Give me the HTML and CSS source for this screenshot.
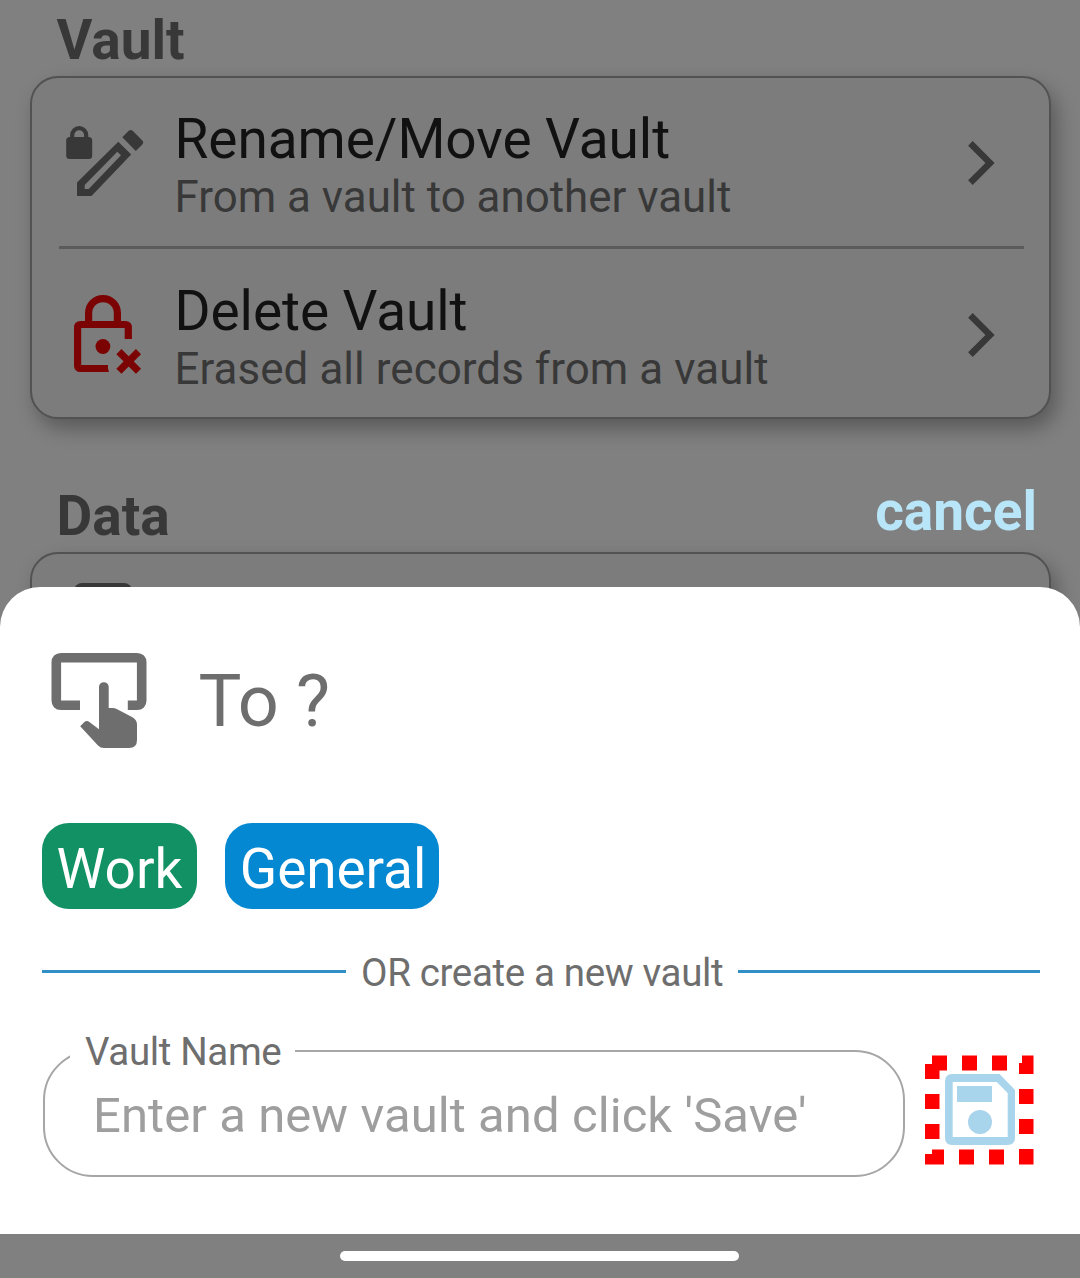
FILE: index.html
```html
<!DOCTYPE html>
<html lang="en">
<head>
<meta charset="utf-8">
<title>Vault settings</title>
<link rel="stylesheet" href="styles.css">
</head>
<body>
<div class="screen">
  <main class="settings">
    <h2 class="heading">Vault</h2>
    <section class="card">
      <div class="row">
        <svg class="row-icon" viewBox="60 120 90 84" fill="#383838">
          <rect x="66.2" y="137" width="26" height="22" rx="3.5"/>
          <path d="M72.2 139v-3.8a7 7 0 0 1 14 0v3.8" fill="none" stroke="#383838" stroke-width="4.2"/>
          <path fill-rule="evenodd" d="M77 182.5L118.3 141.7L131.2 154.5L91.5 196H77zM84.7 185V189H88.7L121 155.2L117.3 151.7z"/>
          <path d="M122.3 137.3l6.2-6.2q2.2-2 4.4 0l9.2 9.2q2.2 2.200 0 4.400l-6.300 6.300z"/>
        </svg>
        <div class="row-text">
          <div class="title">Rename/Move Vault</div>
          <div class="subtitle">From a vault to another vault</div>
        </div>
        <svg class="chevron" viewBox="0 0 28 44"><path d="M2.400 2.400L22 22L2.400 41.600" fill="none" stroke="#383838" stroke-width="6.500"/></svg>
      </div>
      <div class="divider"></div>
      <div class="row row-delete">
        <svg class="row-icon" viewBox="60 292 90 84" fill="#7c0303">
          <g fill="none" stroke="#7c0303" stroke-width="7.200">
            <path d="M88.600 323v-10a14.400 14.400 0 0 1 28.800 0v10"/>
            <path d="M128.300 339v-11.500q0-3-3-3h-44.700q-3 0-3 3v38q0 3 3 3h27.400"/>
            <path d="M118.900 351.600l19.600 19.600M138.500 351.600l-19.600 19.600"/>
          </g>
          <path d="M106 364.900h1l2 7.200h-3z"/>
          <circle cx="102.900" cy="346.500" r="7.400"/>
        </svg>
        <div class="row-text">
          <div class="title">Delete Vault</div>
          <div class="subtitle">Erased all records from a vault</div>
        </div>
        <svg class="chevron" viewBox="0 0 28 44"><path d="M2.400 2.400L22 22L2.400 41.600" fill="none" stroke="#383838" stroke-width="6.500"/></svg>
      </div>
    </section>
    <h2 class="heading heading-data">Data</h2>
    <section class="card card-data">
      <div class="data-icon"></div>
    </section>
  </main>

  <div class="overlay">
    <div class="cancel">cancel</div>
    <section class="sheet">
      <header class="sheet-head">
        <svg class="touch" viewBox="51 653 97 96" fill="#6e6e6e">
          <path d="M80 705.200H61q-4.700 0-4.700-4.700v-38q0-4.700 4.700-4.700h76q4.700 0 4.700 4.700v38q0 4.700-4.700 4.700h-9.200" fill="none" stroke="#6e6e6e" stroke-width="9.600"/>
          <path d="M99 729.200V687a4.850 4.850 0 0 1 9.700 0v21h4q2 0 4 1L132 717q5 2.800 5 7.500V740q0 8-8 8h-25q-3.500 0-6-2.500L80.200 726.300l4.200-4.200q2.200-2 5-.2z"/>
        </svg>
        <span class="to">To ?</span>
      </header>
      <div class="chips">
        <span class="chip work">Work</span>
        <span class="chip general">General</span>
      </div>
      <div class="or"><span>OR create a new vault</span></div>
      <div class="entry">
        <div class="field">
          <label class="label">Vault Name</label>
          <span class="placeholder">Enter a new vault and click 'Save'</span>
        </div>
        <svg class="save" viewBox="924 1055 110 110">
          <g fill="#ff0000">
            <path d="M932 1055.500h15v15h-7.500v8.500h-14.500v-15h7z"/>
            <path d="M962 1055.500h15v15h-15zM992 1055.500h15v15h-15z"/>
            <path d="M1022 1055.500h11.500v18.500h-14.500v-11h3z"/>
            <path d="M925 1094h14.500v15h-14.500zM925 1124h14.500v15h-14.500z"/>
            <path d="M932 1149.500h12v15h-19v-10.500h7z"/>
            <path d="M959 1149.500h15v15h-15zM989 1149.500h15v15h-15z"/>
            <path d="M1019 1089h14.500v15h-14.500zM1019 1119h14.500v15h-14.500zM1019 1149h14.500v15.500h-14.500z"/>
          </g>
          <g fill="#a8d4ec">
            <path fill-rule="evenodd" d="M952 1074h47.500l15.500 16v47.500q0 7.500-7.500 7.500h-55.500q-7 0-7-7.500v-56q0-7.500 7-7.500zM952.700 1082v55h55v-44l-10.900-11z"/>
            <rect x="957" y="1086" width="35" height="16"/>
            <circle cx="980" cy="1122" r="12"/>
          </g>
        </svg>
      </div>
    </section>
    <footer class="nav"><div class="handle"></div></footer>
  </div>
</div>
</body>
</html>
```
FILE: styles.css
```css
* { box-sizing: border-box; }
body { margin: 0; font-family: Roboto, sans-serif; background: #808080; }
.screen { position: relative; width: 1080px; height: 1278px; overflow: hidden; }
.settings { padding: 10px 29px 0 30px; color: #383838; }
.heading { margin: 0 0 6px 26.500px; font-size: 55px; line-height: 60px; font-weight: 700; }
.card {
  height: 343px;
  border: 2px solid #525252;
  border-radius: 28px;
  background: #7c7c7c;
  box-shadow: 6px 10px 20px rgba(0, 0, 0, .3);
}
.row { display: flex; align-items: flex-start; height: 168px; padding: 31px 53px 0 28px; }
.row-delete { padding-top: 32px; }
.divider { height: 3px; margin: 0 25px 0 27px; background: #5b5b5b; }
.row-icon { width: 90px; height: 84px; margin-top: 11px; flex: none; }
.row-text { flex: 1; margin-left: 24.500px; white-space: nowrap; }
.title { font-size: 55px; line-height: 60px; letter-spacing: -.08px; color: #111; }
.subtitle { margin-top: 3px; font-size: 43.900px; line-height: 51px; }
.row-delete .subtitle { letter-spacing: .07px; }
.chevron { width: 28px; height: 44px; margin-top: 32px; flex: none; }
.heading-data { margin-top: 67px; }
.card-data { padding: 29px 0 0 42px; }
.data-icon { width: 58px; height: 60px; border-radius: 8px; background: #383838; }

.overlay { position: absolute; left: 0; right: 0; bottom: 0; display: flex; flex-direction: column; }
.cancel { align-self: flex-end; margin: 0 43px 46px 0; font-size: 55px; line-height: 60px; font-weight: 700; color: #b8e6f8; }
.sheet { height: 647px; padding: 66px 41px 0 42px; border-radius: 40px 40px 0 0; background: #fff; color: #6e6e6e; }
.sheet-head { display: flex; height: 96px; margin-left: 9px; }
.touch { width: 97px; height: 96px; }
.to { margin-left: 50.500px; font-size: 72px; line-height: 97px; letter-spacing: -.3px; }
.chips { display: flex; gap: 28px; margin-top: 74px; }
.chip { height: 86px; border-radius: 27px; color: #fff; font-size: 55px; line-height: 92px; text-align: center; }
.work { width: 155px; background: #129164; }
.general { width: 214px; padding-left: 2px; letter-spacing: -.1px; background: #0488d1; }
.or { display: flex; align-items: center; gap: 15px; height: 50px; margin-top: 38px; font-size: 38.500px; letter-spacing: -.35px; line-height: 50px; white-space: nowrap; }
.or span { padding-top: 2px; }
.or::before, .or::after { content: ""; flex: none; width: 302px; height: 3px; background: #3090c7; margin-top: -1px; }
.or::before { width: 304px; }
.entry { display: flex; margin: 53px 5px 0 1px; }
.field { position: relative; width: 862px; height: 127px; padding: 34px 0 0 48px; border: 2px solid #a6a6a6; border-radius: 50px; white-space: nowrap; }
.label { position: absolute; left: 25px; top: -27px; width: 225px; padding-left: 15px; background: #fff; font-size: 38.500px; letter-spacing: -.35px; line-height: 54px; }
.placeholder { display: block; font-size: 49px; letter-spacing: .08px; line-height: 60px; color: #9e9e9e; }
.save { width: 110px; height: 110px; margin: 5px 0 0 19px; flex: none; }
.nav { display: flex; justify-content: center; height: 44px; padding: 17px 1px 0 0; background: #808080; }
.handle { width: 399px; height: 10px; border-radius: 5px; background: #fff; }
```
